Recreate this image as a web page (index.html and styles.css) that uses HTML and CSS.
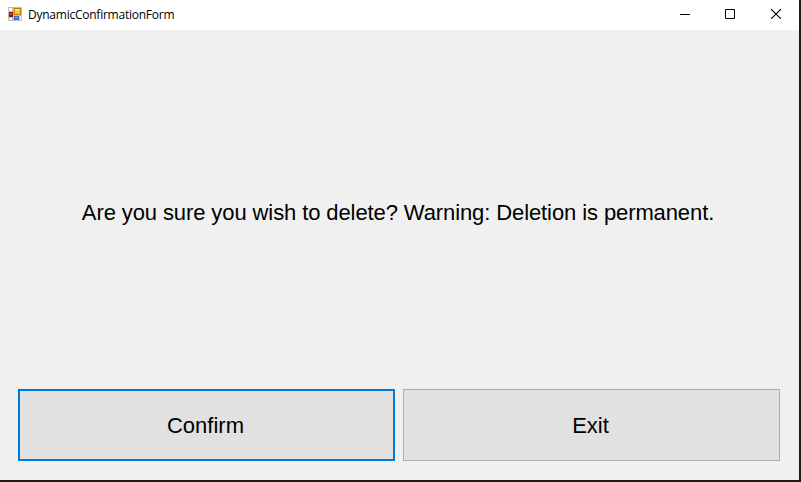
FILE: index.html
```html
<!DOCTYPE html>
<html lang="en">
<head>
<meta charset="utf-8">
<title>DynamicConfirmationForm</title>
<link rel="stylesheet" href="styles.css">
</head>
<body>
<div class="window">
  <header class="titlebar">
    <svg class="app-icon" width="14" height="14" viewBox="0 0 14 14" shape-rendering="crispEdges">
      <path fill="#bdbdbd" d="M0 0h14v14H0z"/>
      <path fill="#fff" d="M1 1h3v3H1zM1 11h3v2H1zM12 9h1v4h-1z"/>
      <path fill="#9c1208" d="M1 5h4v5H1z"/>
      <path fill="#d84a38" d="M2 6h2v2H2z"/>
      <path fill="#b88408" d="M6 1h7v7H6z"/>
      <path fill="#f8c83c" d="M7 2h5v5H7z"/>
      <path fill="#ffe078" d="M7 2h4v2H7z"/>
      <path fill="#3c6fd8" d="M6 9h5v4H6z"/>
      <path fill="#78a8f8" d="M7 10h3v1H7z"/>
    </svg>
    <h1 class="title">DynamicConfirmationForm</h1>
    <div class="controls">
      <span class="control minimize"><svg width="10" height="10" shape-rendering="crispEdges"><path fill="#000" d="M0 5h10v1H0z"/></svg></span>
      <span class="control"><svg width="10" height="10"><path fill="none" stroke="#000" d="M.5.5h9v9h-9z"/></svg></span>
      <span class="control"><svg width="10" height="10"><path fill="none" stroke="#000" stroke-width="1.1" d="M0 0l10 10M10 0L0 10"/></svg></span>
    </div>
  </header>
  <main class="form">
    <p class="message">Are you sure you wish to delete? Warning: Deletion is permanent.</p>
    <div class="actions">
      <button class="button default">Confirm</button>
      <button class="button">Exit</button>
    </div>
  </main>
</div>
</body>
</html>
```

FILE: styles.css
```css
* { box-sizing: border-box; }
body { margin: 0; background: #1c1c20; }
.window {
  width: 799px;
  height: 480px;
  display: flex;
  flex-direction: column;
  background: #f0f0f0;
  color: #000;
  overflow: hidden;
}
.titlebar {
  height: 30px;
  flex: none;
  display: flex;
  align-items: center;
  padding-left: 8px;
  background: #fff;
}
.app-icon { margin-top: -2px; }
.title {
  margin: 0 0 0 6px;
  font: 12px/16px "Open Sans", sans-serif;
  letter-spacing: -0.24px;
}
.controls { display: flex; margin-left: auto; }
.control {
  width: 46px;
  height: 30px;
  display: flex;
  align-items: center;
  justify-content: center;
  padding-bottom: 2px;
}
.minimize { padding-left: 2px; }
.form {
  flex: 1;
  display: flex;
  flex-direction: column;
  padding: 7px 19px 19px 18px;
}
.message {
  flex: 1;
  margin: 0;
  padding-right: 2px;
  display: flex;
  align-items: center;
  justify-content: center;
  font: 22px/26px "Liberation Sans", Arial, sans-serif;
  letter-spacing: -0.1px;
  white-space: nowrap;
}
.actions {
  display: grid;
  grid-template-columns: 1fr 1fr;
  gap: 8px;
}
.button {
  height: 72px;
  margin: 0;
  padding: 2px 2px 0 0;
  border: 1px solid #adadad;
  border-radius: 0;
  background: #e1e1e1;
  color: #000;
  font: 22px/26px "Liberation Sans", Arial, sans-serif;
}
.button.default { border: 2px solid #0078d7; }
```
